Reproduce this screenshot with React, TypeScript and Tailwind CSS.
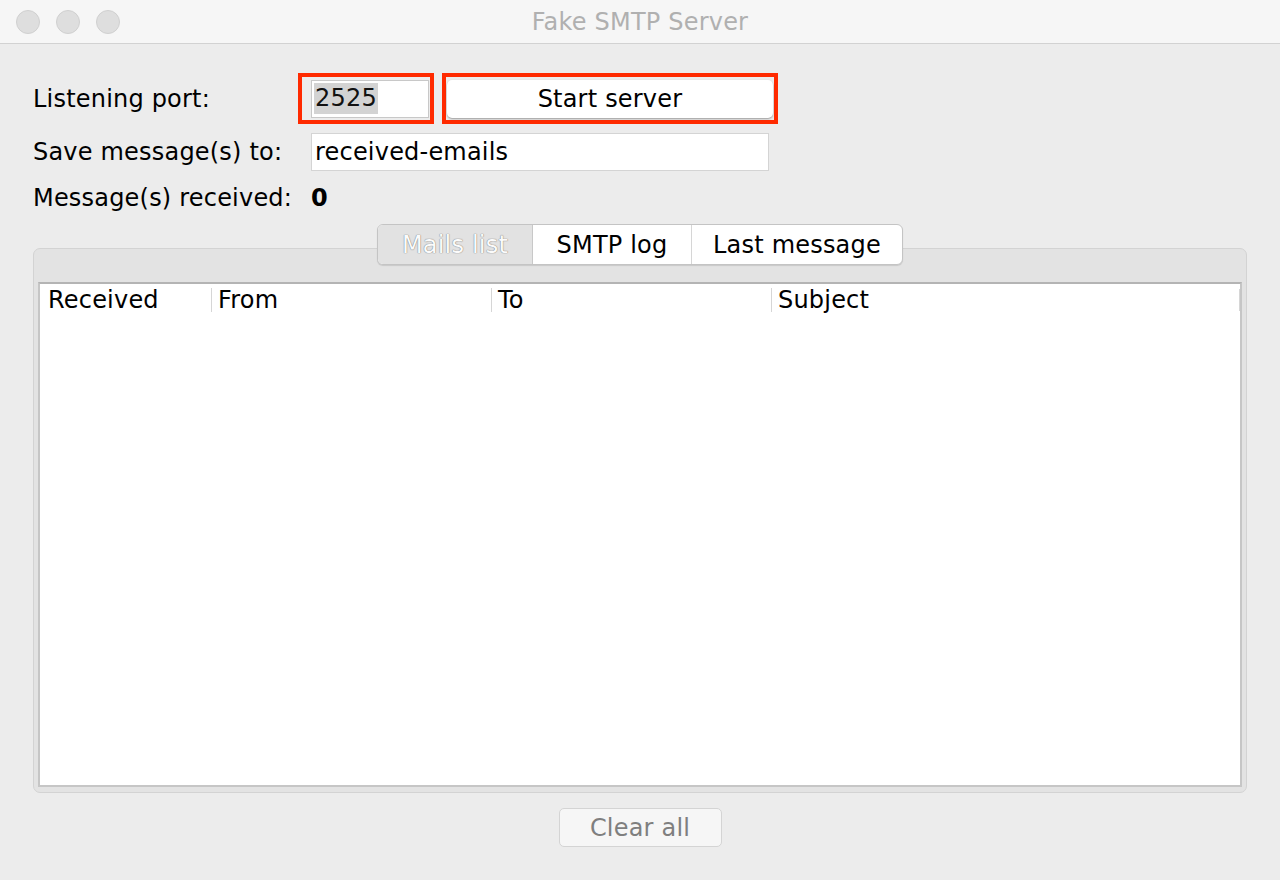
import React from "react";

const font = { fontFamily: '"DejaVu Sans", "Lucida Grande", sans-serif' };

function TrafficLight() {
  return <div className="h-[24px] w-[24px] rounded-full border border-[#d0d0d0] bg-[#dedede]" />;
}

export default function App() {
  const cols = [
    { label: "Received", w: "w-[171px]" },
    { label: "From", w: "w-[280px]" },
    { label: "To", w: "w-[280px]" },
    { label: "Subject", w: "w-[468px]" },
  ];

  return (
    <div className="flex h-[880px] w-[1280px] flex-col bg-[#ececec] text-[24px] tracking-[0.2px] text-black" style={font}>
      {/* title bar */}
      <div className="relative flex h-[44px] shrink-0 items-center border-b border-[#d2d2d2] bg-[#f6f6f6] px-[16px]">
        <div className="flex gap-[16px]">
          <TrafficLight />
          <TrafficLight />
          <TrafficLight />
        </div>
        <div className="absolute inset-x-0 top-0 flex h-[44px] items-center justify-center text-[24px] text-[#b0b0b0]">
          Fake SMTP Server
        </div>
      </div>

      <div className="flex flex-1 flex-col px-[33px]">
        {/* listening port */}
        <div className="mt-[29px] flex h-[51px] items-center">
          <div className="w-[265px]">Listening port:</div>
          <div className="flex h-[51px] w-[136px] items-center border-[4px] border-[#ff2a00] pl-[9px]">
            <div className="flex h-[38px] w-[118px] items-center border border-[#c8c8c8] bg-white pl-[2px]">
              <span className="bg-[#d3d3d3] px-[1px] leading-[31px] text-[#111]">2525</span>
            </div>
          </div>
          <div className="ml-[8px] flex h-[51px] w-[336px] items-center justify-center border-[4px] border-[#ff2a00]">
            <div className="flex h-[38px] w-[326px] items-center justify-center rounded-[5px] bg-white shadow-[0_1px_2px_rgba(0,0,0,0.35)]">
              Start server
            </div>
          </div>
        </div>

        {/* save to */}
        <div className="mt-[9px] flex h-[38px] items-center">
          <div className="w-[278px]">Save message(s) to:</div>
          <div className="flex h-[38px] w-[458px] items-center border border-[#d4d4d4] bg-white pl-[3px]">
            received-emails
          </div>
        </div>

        {/* received */}
        <div className="mt-[8px] flex h-[38px] items-center">
          <div className="w-[278px]">Message(s) received:</div>
          <div className="font-bold">0</div>
        </div>

        {/* tabbed pane */}
        <div className="relative mt-[7px] flex flex-col">
          <div className="relative z-10 flex justify-center">
            <div className="flex h-[41px] overflow-hidden rounded-[6px] border border-[#c4c4c4] bg-white shadow-[0_1px_1px_rgba(0,0,0,0.12)]">
              <div className="flex w-[155px] items-center justify-center border-r border-[#c8c8c8] bg-[#e2e2e2] text-[#fbfbfb] [text-shadow:0_0_1px_#6f6f6f,0_0_1px_#9a9a9a]">
                Mails list
              </div>
              <div className="flex w-[159px] items-center justify-center border-r border-[#d6d6d6]">SMTP log</div>
              <div className="flex w-[210px] items-center justify-center">Last message</div>
            </div>
          </div>
          <div className="-mt-[17px] flex h-[545px] flex-col rounded-[7px] border border-[#d3d3d3] bg-[#e3e3e3] px-[4px] pb-[5px] pt-[33px]">
            <div className="flex flex-1 flex-col border-[2px] border-[#c6c6c6] border-t-[#b4b4b4] bg-white">
              <div className="flex h-[31px] items-center">
                {cols.map((c, i) => (
                  <div key={c.label} className={`flex h-[24px] items-center ${c.w} ${i > 0 ? "border-l border-[#d6d6d6] pl-[6px]" : "pl-[8px]"}`}>
                    {c.label}
                  </div>
                ))}
                <div className="h-[22px] border-l border-[#d6d6d6]" />
              </div>
            </div>
          </div>
        </div>

        {/* clear all */}
        <div className="mt-[15px] flex justify-center">
          <div className="flex h-[39px] w-[163px] items-center justify-center rounded-[5px] border border-[#d4d4d4] bg-[#f6f6f6] text-[#7f7f7f]">
            Clear all
          </div>
        </div>
      </div>
    </div>
  );
}
